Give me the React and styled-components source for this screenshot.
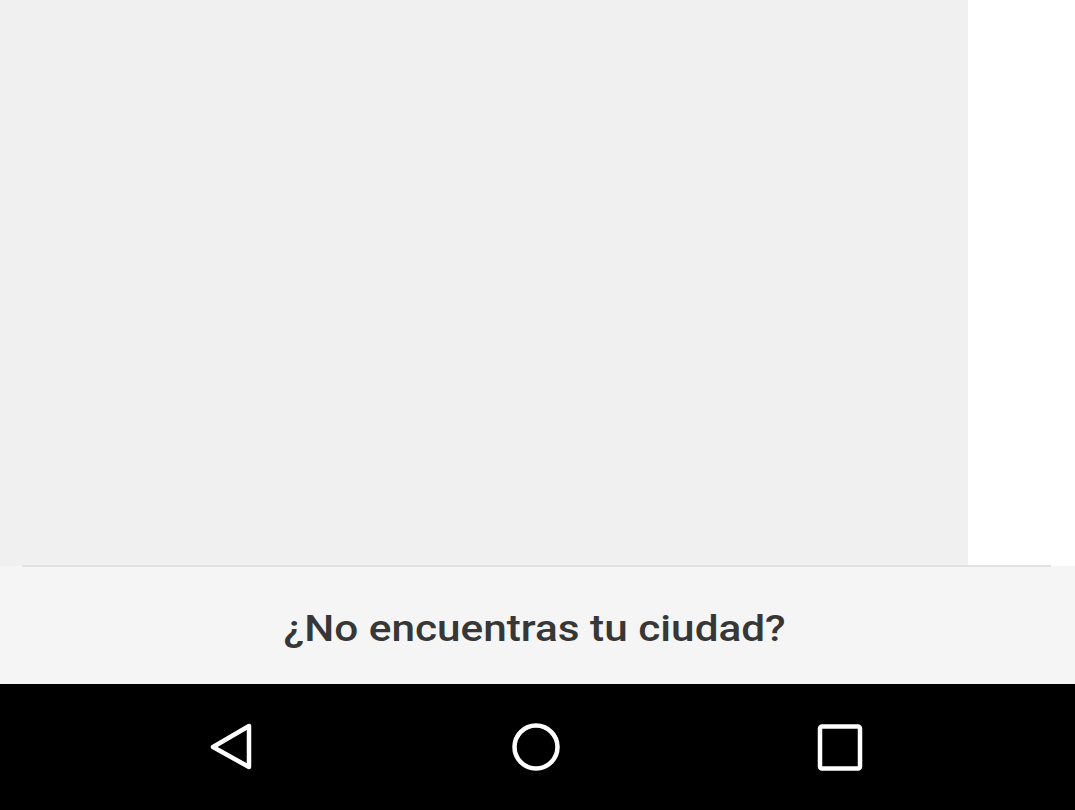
import React from "react";
import styled, { createGlobalStyle } from "styled-components";

const Global = createGlobalStyle`
  html, body { margin: 0; padding: 0; background: #ffffff; }
  body { font-family: Roboto, "Noto Sans", sans-serif; }
`;

const Screen = styled.div`
  width: 1075px;
  height: 810px;
  display: flex;
  flex-direction: column;
  overflow: hidden;
`;

const Content = styled.div`
  height: 566px;
  display: flex;
  background: #ffffff;
`;

const ListPanel = styled.div`
  width: 968px;
  background: #f0f0f0;
`;

const Footer = styled.div`
  position: relative;
  height: 118px;
  background: #f5f5f5;
  display: flex;
  align-items: center;
  justify-content: center;
  &::before {
    content: "";
    position: absolute;
    top: -1px;
    left: 22px;
    right: 24px;
    height: 2px;
    background: #e2e2e2;
  }
`;

const FooterText = styled.span`
  font-family: Roboto, "Noto Sans", sans-serif;
  font-weight: 500;
  font-size: 36px;
  color: #373737;
  padding-top: 7px;
  display: inline-block;
  transform: scaleX(1.175);
  transform-origin: center;
  margin-right: 5px;
`;

const NavBar = styled.div`
  flex: 1;
  background: #000000;
  display: flex;
  align-items: center;
  justify-content: center;
  gap: 256px;
  padding-right: 4px;
`;

const NavButton = styled.div`
  width: 48px;
  height: 48px;
  display: flex;
  align-items: center;
  justify-content: center;
`;

export default function App() {
  return (
    <Screen>
      <Global />
      <Content>
        <ListPanel />
      </Content>
      <Footer>
        <FooterText>¿No encuentras tu ciudad?</FooterText>
      </Footer>
      <NavBar>
        <NavButton>
          <svg width="48" height="48" viewBox="0 0 48 48">
            <path d="M41 3 L41 44 L5 24 Z" fill="none" stroke="#fff" strokeWidth="4.5" strokeLinejoin="round" />
          </svg>
        </NavButton>
        <NavButton>
          <svg width="48" height="48" viewBox="0 0 48 48">
            <circle cx="24" cy="24" r="21.5" fill="none" stroke="#fff" strokeWidth="4.5" />
          </svg>
        </NavButton>
        <NavButton>
          <svg width="48" height="48" viewBox="0 0 48 48">
            <rect x="4" y="3.5" width="40" height="42" rx="2" fill="none" stroke="#fff" strokeWidth="4.5" />
          </svg>
        </NavButton>
      </NavBar>
    </Screen>
  );
}
